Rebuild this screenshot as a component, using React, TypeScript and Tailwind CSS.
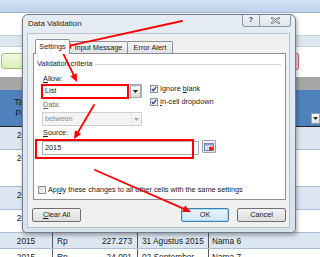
import React from "react";

const FONT = "font-['Liberation_Sans',Arial,sans-serif]";

function Arrow({ x1, y1, x2, y2 }: { x1: number; y1: number; x2: number; y2: number }) {
  const dx = x2 - x1;
  const dy = y2 - y1;
  const L = Math.hypot(dx, dy);
  const ux = dx / L;
  const uy = dy / L;
  const hl = 8;
  const hw = 3.6;
  const bx = x2 - ux * hl;
  const by = y2 - uy * hl;
  const pts = `${x2},${y2} ${bx - uy * hw},${by + ux * hw} ${bx + uy * hw},${by - ux * hw}`;
  return (
    <g>
      <line x1={x1} y1={y1} x2={bx + ux} y2={by + uy} stroke="#ff0000" strokeWidth={1.8} strokeLinecap="round" />
      <polygon points={pts} fill="#ff0000" />
    </g>
  );
}

function Check({ checked }: { checked?: boolean }) {
  return (
    <span className="relative block w-[8px] h-[8px] shrink-0 border border-[#8e8f8f] bg-gradient-to-br from-[#dde4ec] to-[#f8fafc]">
      {checked && (
        <svg className="absolute left-0 top-0" width="6" height="6" viewBox="0 0 6 6">
          <path d="M0.8 3 L2.3 4.7 L5.3 0.9" stroke="#21418a" strokeWidth="1.2" fill="none" />
        </svg>
      )}
    </span>
  );
}

function DropBtn({ disabled }: { disabled?: boolean }) {
  return (
    <span
      className={
        disabled
          ? "flex items-center justify-center w-[10px] h-full border-l border-[#e2e2e2] bg-[#f4f4f4]"
          : "flex items-center justify-center w-[11px] h-[13px] border border-[#a3a7ad] rounded-[1px] bg-gradient-to-b from-[#f6f6f6] to-[#dadada]"
      }
    >
      <svg width="5" height="3" viewBox="0 0 5 3">
        <path d="M0 0 L5 0 L2.5 3 Z" fill={disabled ? "#a0a0a0" : "#1a1a1a"} />
      </svg>
    </span>
  );
}

const rows = [
  { h: "h-[23px]", bg: "bg-[#dce6f1]", c: ["2015", "", "", "", ""] },
  { h: "h-[37px]", bg: "bg-white", c: ["2015", "", "", "", ""] },
  { h: "h-[23px]", bg: "bg-[#dce6f1]", c: ["2015", "", "", "", ""] },
  { h: "h-[23px]", bg: "bg-white", c: ["2015", "", "", "", ""] },
  { h: "h-[16px]", bg: "bg-[#dce6f1]", c: ["2015", "Rp", "227.273", "31 Agustus 2015", "Nama 6"] },
  { h: "h-[16px]", bg: "bg-white", c: ["2015", "Rp", "24.091", "02 September", "Nama 7"] },
];

export default function App() {
  return (
    <div className={`relative w-[320px] h-[257px] overflow-hidden bg-white text-[#1a1a1a] ${FONT}`}>
      {/* spreadsheet background */}
      <div className="flex flex-col">
        <div className="h-[13px] bg-gradient-to-b from-[#d3e1f2] to-[#bfd2ea] border-b border-[#9fb6d3]" />
        <div className="h-[22px] bg-white" />
        <div className="h-[12px] bg-[#dde5ee] border-y border-[#c3cfdd]" />
        <div className="h-[30px] bg-white flex items-start justify-between pt-[6px] pl-[1px] pr-[21px]">
          <div className="w-[60px] h-[16px] rounded-[3px] border border-[#a7c27a] bg-gradient-to-b from-[#f1f9e4] to-[#d9efb8]" />
          <div className="w-[40px] h-[17px] rounded-[2px] border border-[#d86a6a] bg-[#f3d6d6]" />
        </div>
        <div className="h-[13px] bg-[#a6a6a6]" />
        <div className="relative h-[37px] bg-[#4f81bd] border-b border-[#262626] grid grid-cols-[53px_1fr]">
          <div className="flex items-center justify-center text-center text-[9px] leading-[11px] text-[#151515]">
            Tahun
            <br />
            Pajak
          </div>
          <div className="flex items-end justify-end pb-[2px]">
            <div className="w-[9px] h-[11px] border border-[#9aa5b1] bg-gradient-to-b from-white to-[#e3e3e3] flex items-center justify-center">
              <svg width="5" height="3" viewBox="0 0 5 3">
                <path d="M0 0 L5 0 L2.5 3 Z" fill="#222" />
              </svg>
            </div>
          </div>
        </div>
        {rows.map((r, i) => (
          <div
            key={i}
            className={`${r.h} ${r.bg} grid grid-cols-[53px_85px_71px_1fr] border-b border-[#a9bdd6] text-[8.3px] leading-[10px]`}
          >
            <div className="border-r border-[#595959] text-center pt-[3px]">{r.c[0]}</div>
            <div className="border-r border-[#595959] flex justify-between pt-[3px] pl-[4px] pr-[5px]">
              <span>{r.c[1]}</span>
              <span>{r.c[2]}</span>
            </div>
            <div className="border-r border-[#595959] pt-[3px] pl-[4px] whitespace-nowrap overflow-hidden">{r.c[3]}</div>
            <div className="pt-[3px] pl-[3px]">{r.c[4]}</div>
          </div>
        ))}
      </div>

      {/* dialog window */}
      <div className="absolute left-[22px] top-[14px] w-[274px] h-[219px] flex flex-col rounded-t-[6px] rounded-b-[4px] border border-[#6e7e90] bg-gradient-to-b from-[#e6ecf3] to-[#d8e1ec] shadow-[1px_2px_4px_rgba(0,0,0,0.35)]">
        <div className="h-[18px] flex items-start justify-between">
          <div className="h-[18px] flex items-center pl-[5px] text-[8px] text-[#1e1e1e]">Data Validation</div>
          <div className="flex mr-[4px]">
            <div className="w-[18px] h-[12px] flex items-center justify-center border border-t-0 border-[#8d99a8] rounded-bl-[3px] bg-gradient-to-b from-[#eef2f6] to-[#dfe6ee] text-[7px] font-bold text-[#3a3a3a]">
              ?
            </div>
            <div className="w-[32px] h-[12px] -ml-px flex items-center justify-center border border-t-0 border-[#8d99a8] rounded-br-[3px] bg-gradient-to-b from-[#eef2f6] to-[#dfe6ee]">
              <svg width="9" height="7" viewBox="0 0 9 7">
                <path d="M1 0.8 L8 6.2 M8 0.8 L1 6.2" stroke="#6b6b6b" strokeWidth="2.2" strokeLinecap="round" />
                <path d="M1 0.8 L8 6.2 M8 0.8 L1 6.2" stroke="#ffffff" strokeWidth="1" strokeLinecap="round" />
              </svg>
            </div>
          </div>
        </div>

        {/* client area */}
        <div className="ml-[4px] mr-[5px] h-[195px] bg-[#f0f0f0] shadow-[inset_0_0_0_1px_#b7c3d0] flex flex-col text-[7.3px] leading-[8px]">
          <div className="pt-[6px] pl-[6px] pr-[4px] flex flex-col">
            {/* tabs */}
            <div className="h-[14px] flex items-end pl-[2px]">
              <div className="relative z-10 w-[35px] h-[15px] -mb-px border border-b-0 border-[#8c9199] rounded-t-[2px] bg-white flex items-center justify-center pb-[1px]">
                Settings
              </div>
              <div className="w-[58px] h-[12px] border border-b-0 border-l-0 border-[#8c9199] rounded-tr-[2px] bg-gradient-to-b from-[#f5f5f5] to-[#e2e2e2] flex items-center justify-center">
                Input Message
              </div>
              <div className="w-[45px] h-[12px] border border-b-0 border-l-0 border-[#8c9199] rounded-tr-[2px] bg-gradient-to-b from-[#f5f5f5] to-[#e2e2e2] flex items-center justify-center">
                Error Alert
              </div>
            </div>
            {/* panel */}
            <div className="h-[147px] border border-[#8c9199] bg-white flex flex-col">
              <div className="h-[20px] flex items-center pl-[3px] pr-[4px] gap-[3px]">
                <span className="whitespace-nowrap">Validation criteria</span>
                <span className="flex-1 h-px bg-[#cfd8e2]" />
              </div>
              <div className="mt-[1px] h-[7px] leading-[7px] pl-[9px]">
                <span className="underline">A</span>llow:
              </div>
              <div className="mt-[2px] flex items-start pl-[8px]">
                <div className="flex flex-col w-[100px]">
                  <div className="h-[14px] flex items-center justify-between border border-[#abadb3] bg-white pl-[2px] pr-0">
                    <span>List</span>
                    <DropBtn />
                  </div>
                  <div className="mt-[3px] h-[8px] pl-[1px] text-[#6d6d6d]">
                    <span className="underline">D</span>ata:
                  </div>
                  <div className="mt-[3px] h-[14px] flex items-stretch justify-between border border-[#cfcfcf] bg-[#f4f4f4] pl-[2px] text-[#8d8d8d]">
                    <span className="self-center">between</span>
                    <DropBtn disabled />
                  </div>
                  <div className="mt-[3px] h-[8px] pl-[1px]">
                    <span className="underline">S</span>ource:
                  </div>
                </div>
                <div className="ml-[8px] flex flex-col pt-[1px] gap-[5px]">
                  <div className="flex items-center gap-[2px]">
                    <Check checked />
                    <span>
                      Ignore <span className="underline">b</span>lank
                    </span>
                  </div>
                  <div className="flex items-center gap-[2px]">
                    <Check checked />
                    <span>
                      <span className="underline">I</span>n-cell dropdown
                    </span>
                  </div>
                </div>
              </div>
              <div className="mt-[4px] pl-[8px] flex items-start gap-[3px]">
                <div className="w-[157px] h-[14px] border border-[#abadb3] bg-white flex items-center pl-[2px]">2015</div>
                <div className="-mt-px w-[14px] h-[13px] border border-[#9aa3ad] rounded-[1px] bg-gradient-to-b from-[#f4f6f9] to-[#dfe4ea] flex items-center justify-center">
                  <svg width="10" height="8" viewBox="0 0 10 8">
                    <rect x="0.5" y="0.5" width="9" height="7" fill="#ffffff" stroke="#5f7fa8" />
                    <rect x="0.5" y="0.5" width="9" height="2" fill="#7ea0cc" />
                    <path d="M0.5 5 H9.5 M3.5 0.5 V7.5 M6.5 0.5 V7.5" stroke="#9fb3cc" strokeWidth="0.6" />
                    <rect x="5" y="3.8" width="4" height="3.4" fill="#e0201a" />
                  </svg>
                </div>
              </div>
              <div className="mt-[31px] pl-[4px] flex items-center gap-[2px]">
                <span className="block w-[8px] h-[8px] border border-[#8e8f8f] bg-gradient-to-br from-[#dcdcdc] to-[#f7f7f7]" />
                <span className="whitespace-nowrap">
                  Ap<span className="underline">p</span>ly these changes to all other cells with the same settings
                </span>
              </div>
            </div>
          </div>
          {/* buttons */}
          <div className="mt-[8px] pl-[5px] pr-[4px] flex justify-between">
            <div className="w-[49px] h-[14px] rounded-[2px] border border-[#707070] bg-gradient-to-b from-[#f3f3f3] to-[#dcdcdc] flex items-center justify-center">
              <span>
                <span className="underline">C</span>lear All
              </span>
            </div>
            <div className="flex gap-[8px]">
              <div className="w-[48px] h-[14px] rounded-[2px] border border-[#3c7fb1] bg-gradient-to-b from-[#eaf6fd] to-[#cfe6f5] shadow-[inset_0_0_0_1px_#a8dcf6] flex items-center justify-center">
                OK
              </div>
              <div className="w-[49px] h-[14px] rounded-[2px] border border-[#707070] bg-gradient-to-b from-[#f3f3f3] to-[#dcdcdc] flex items-center justify-center">
                Cancel
              </div>
            </div>
          </div>
        </div>
      </div>

      {/* red annotations */}
      <svg className="absolute left-0 top-0 pointer-events-none" width="320" height="257" viewBox="0 0 320 257">
        <rect x="42" y="85" width="86" height="13" fill="none" stroke="#ff0000" strokeWidth="2" />
        <rect x="36" y="140" width="157" height="18" fill="none" stroke="#ff0000" strokeWidth="2" />
        <Arrow x1={182} y1={21} x2={63} y2={47} />
        <Arrow x1={62} y1={51} x2={77} y2={82} />
        <Arrow x1={94} y1={105} x2={74} y2={139} />
        <Arrow x1={95} y1={170} x2={191} y2={212} />
      </svg>
    </div>
  );
}
